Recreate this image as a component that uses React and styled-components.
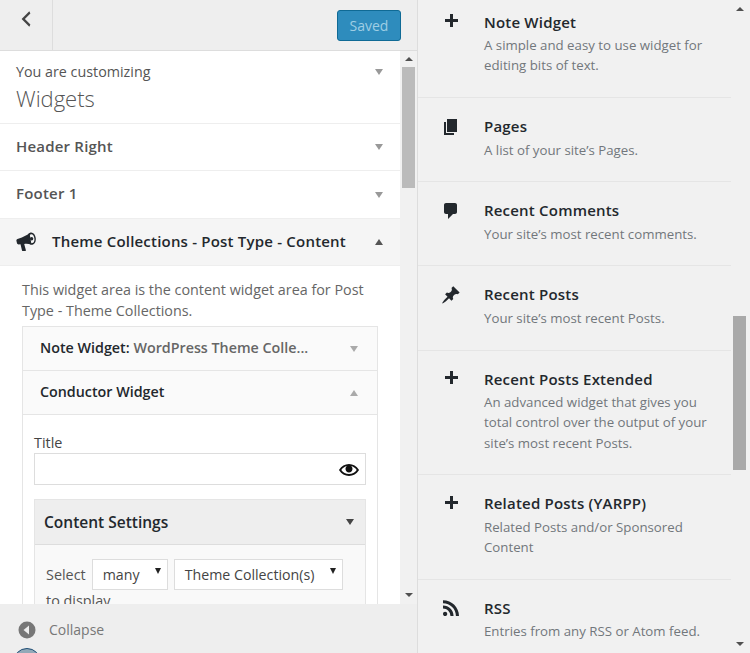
import React from "react";
import styled, { createGlobalStyle } from "styled-components";

const Global = createGlobalStyle`
  html, body { margin: 0; padding: 0; width: 750px; height: 653px; overflow: hidden; background: #f1f1f1; }
  #root { width: 750px; height: 653px; }
  * { box-sizing: border-box; }
`;

const Page = styled.div`
  display: flex; width: 750px; height: 653px; overflow: hidden;
  font-family: "Open Sans", sans-serif; color: #555;
`;
const LeftPanel = styled.div`
  display: flex; flex-direction: column; width: 418px; height: 653px; flex: none;
  border-right: 1px solid #ddd; background: #eee;
`;
const Header = styled.div`
  display: flex; justify-content: space-between; height: 51px; flex: none;
  background: #eee; border-bottom: 1px solid #ddd; padding-right: 16px;
`;
const BackButton = styled.div`
  width: 53px; height: 50px; border-right: 1px solid #ddd; padding: 8px 0 0 15px; color: #444;
`;
const SavedButton = styled.div`
  width: 64px; height: 31px; margin-top: 10px; display: flex; align-items: center; justify-content: center;
  background: #2e8cbd; border: 1px solid #0f6a95; border-radius: 3px; color: #9fcee4; font-size: 14px;
`;
const Middle = styled.div`
  display: flex; flex: 1; min-height: 0; overflow: hidden;
`;
const Scroller = styled.div`
  width: 400px; flex: none; background: #fff; overflow: hidden;
`;
const Scrollbar = styled.div`
  display: flex; flex-direction: column; align-items: center; width: 17px; flex: none;
  background: #f1f1f1; padding-top: ${(p) => p.$pad}px;
`;
const Thumb = styled.div`
  width: 13px; flex: none; height: ${(p) => p.$h}px; margin-top: ${(p) => p.$top}px; background: ${(p) => p.$bg};
`;
const SmallArrow = styled.div`
  width: 0; height: 0; flex: none;
  border-left: 4px solid transparent; border-right: 4px solid transparent;
  ${(p) => (p.$up ? "border-bottom" : "border-top")}: 4px solid #505050;
  ${(p) => p.$end && "margin-top: auto; margin-bottom: 7px;"}
`;
const SelectArrow = styled.span`
  display: block; width: 0; height: 0; flex: none; margin-bottom: 7px;
  border-left: 3px solid transparent; border-right: 3px solid transparent; border-top: 6px solid #222;
`;
const Caret = styled.span`
  display: block; width: 0; height: 0; flex: none;
  border-left: 4.5px solid transparent; border-right: 4.5px solid transparent;
  ${(p) => (p.$up ? "border-bottom" : "border-top")}: 6px solid ${(p) => p.$c || "#999"};
`;
const InfoSection = styled.div`
  display: flex; justify-content: space-between; height: 73px; padding: 11px 17px 0 16px;
  border-bottom: 1px solid #eee;
`;
const InfoCaret = styled.div`padding-top: 7px;`;
const InfoLabel = styled.div`font-size: 14.3px; line-height: 20px; color: #555;`;
const InfoTitle = styled.div`font-size: 22px; font-weight: 300; line-height: 30px; margin-top: 1px; color: #555;`;
const SectionRow = styled.div`
  display: flex; align-items: center; justify-content: space-between;
  height: ${(p) => p.$h}px; padding: 0 17px 0 16px; border-bottom: 1px solid #eee;
  background: ${(p) => (p.$open ? "#f5f5f5" : "#fff")};
`;
const SectionTitle = styled.div`
  font-size: 15px; font-weight: 600; letter-spacing: 0.2px; margin-bottom: 3px;
  color: ${(p) => (p.$dark ? "#23282d" : "#555")};
`;
const TitleGroup = styled.div`display: flex; align-items: center; gap: 16px;`;
const OpenBody = styled.div`padding: 13px 22px 0 22px;`;
const Description = styled.p`
  margin: 0 0 5px; font-size: 14.35px; line-height: 21px; color: #666;
`;
const WidgetBox = styled.div`border: 1px solid #e5e5e5; background: #fff;`;
const WidgetRow = styled.div`
  display: flex; align-items: center; justify-content: space-between; height: 44px;
  padding: 0 19px 0 17px; background: #fafafa; border-bottom: 1px solid #e5e5e5;
  font-size: 14.3px; font-weight: 600; color: #23282d;
`;
const WidgetLabel = styled.span`margin-bottom: 2px;`;
const WidgetName = styled.span`font-weight: 600; color: #666;`;
const WidgetBody = styled.div`padding: 18px 11px 0 11px;`;
const FieldLabel = styled.div`font-size: 14.4px; line-height: 20px; color: #444;`;
const TitleInput = styled.div`
  display: flex; align-items: center; justify-content: flex-end; height: 32px; padding: 2px 6px 0 0;
  border: 1px solid #ddd; background: #fff; color: #111; margin-bottom: 14px;
`;
const SettingsBox = styled.div`border: 1px solid #e5e5e5; background: #f9f9f9; height: 200px;`;
const SettingsHead = styled.div`
  display: flex; align-items: center; justify-content: space-between; height: 45px; padding: 0 11px 0 9px;
  background: #eee; border-bottom: 1px solid #ddd; font-size: 15.5px; font-weight: 600; color: #23282d;
`;
const SettingsBody = styled.div`padding: 14px 11px; font-size: 14.4px; color: #555;`;
const SelectRow = styled.div`display: flex; align-items: center; gap: 6px; color: #555;`;
const SelectBox = styled.div`
  display: flex; align-items: center; justify-content: space-between; height: 31px; width: ${(p) => p.$w}px;
  padding: 0 6px 0 10px; border: 1px solid #ddd; background: #fff; font-size: 14.2px; color: #444;
`;
const ToDisplay = styled.div`margin-top: 1px; line-height: 20px; color: #555;`;
const Footer = styled.div`
  height: 49px; flex: none; background: #eee; padding: 17px 0 0 18px; overflow: hidden;
`;
const CollapseRow = styled.div`
  display: flex; align-items: center; gap: 13px; height: 18px; font-size: 14px; color: #777;
`;
const CollapseLabel = styled.span`margin-bottom: 2px;`;
const Avatar = styled.div`
  width: 28px; height: 28px; border-radius: 50%; margin: 9px 0 0 -5px;
  border: 1px solid #1f4e75; background: #93a9b8;
`;
const RightPanel = styled.div`
  display: flex; flex: 1; background: #f1f1f1; overflow: hidden; height: 653px;
`;
const RightList = styled.div`
  width: 313px; flex: none; margin-top: -6.4px; height: 670px; overflow: hidden;
`;
const Item = styled.div`
  display: flex; border-bottom: 1px solid #e5e5e5; padding: 17px 14px 21.5px 23px; gap: 23px;
`;
const ItemIcon = styled.div`width: 20px; flex: none; color: #23282d; margin-top: 1.5px;`;
const ItemBody = styled.div`flex: 1; min-width: 0;`;
const ItemTitle = styled.div`font-size: 15px; font-weight: 600; line-height: 22px; color: #23282d; letter-spacing: 0.2px;`;
const ItemDesc = styled.div`font-size: 13.25px; line-height: 20.2px; color: #72777c; margin-top: 2.5px;`;

const Icon = ({ d, s = 20 }) => (
  <svg width={s} height={s} viewBox="0 0 20 20" fill="currentColor" style={{ display: "block" }}><path d={d} /></svg>
);
const PLUS = "M17 7v3h-5v5H9v-5H4V7h5V2h3v5h5z";
const PAGES = "M6 15V2h10v13H6zm-1 1h8v2H3V5h2v11z";
const COMMENT = "M5 2h9c1.1 0 2 .9 2 2v7c0 1.1-.9 2-2 2h-2l-5 5v-5H5c-1.1 0-2-.9-2-2V4c0-1.1.9-2 2-2z";
const PIN = "M10.44 3.02l1.82-1.82 6.36 6.35-1.83 1.82c-1.05-.68-2.48-.57-3.41.36l-.75.75c-.92.93-1.04 2.35-.35 3.41l-1.83 1.82-2.41-2.41-2.8 2.79c-.42.42-3.38 2.71-3.8 2.29s1.86-3.39 2.28-3.81l2.79-2.79L4.1 9.36l1.83-1.82c1.05.69 2.48.57 3.4-.36l.75-.75c.93-.92 1.05-2.35.36-3.41z";
const RSS = "M14.92 18H18C18 9.32 10.82 2.25 2 2.25v3.02c7.12 0 12.92 5.71 12.92 12.73zm-5.44 0h3.08C12.56 12.27 7.82 7.6 2 7.6v3.02c2 0 3.87.77 5.29 2.16A7.292 7.292 0 0 1 9.48 18zm-5.35-.02c1.17 0 2.13-.93 2.13-2.09 0-1.15-.96-2.09-2.13-2.09-1.18 0-2.13.94-2.13 2.09 0 1.16.95 2.09 2.13 2.09z";
const EYE = "M19.7 9.4C17.7 6 14 3.9 10 3.9S2.3 6 .3 9.4L0 10l.3.6c2 3.4 5.7 5.5 9.7 5.5s7.7-2.1 9.7-5.5l.3-.6-.3-.6zM10 14.1c-3.1 0-6-1.6-7.7-4.1C3.6 8 5.7 6.6 8 6.1c-.9.6-1.5 1.7-1.5 2.9 0 1.9 1.6 3.5 3.5 3.5s3.5-1.6 3.5-3.5c0-1.2-.6-2.3-1.5-2.9 2.3.5 4.4 1.9 5.7 3.9-1.7 2.5-4.6 4.1-7.7 4.1z";
const BACK = "M14 5l-5 5 5 5-1 2-7-7 7-7z";

const Megaphone = () => (
  <svg width="20" height="20" viewBox="0 0 20 20" style={{ display: "block" }}>
    <path fill="#23282d" d="M13.500 1 C11.800 2.800 8 4.800 1.500 7 C.7 7.300 .3 7.900 .4 8.700 L1 11.300 C1.200 12 1.800 12.400 2.600 12.400 L4.500 12.200 L6 18.500 C6.100 18.900 6.400 19.100 6.800 19.100 L9.300 19.100 C9.800 19.100 10 18.800 9.900 18.300 L8.200 11.900 C10.500 11.700 13 11.800 15.500 12.500 Z" />
    <path fill="#23282d" fillRule="evenodd" d="M14.500 .6 C17.200 .1 19.200 2.500 19.700 5.800 C20.200 9.100 19 12.200 16.500 12.800 C13.900 13.300 11.800 11 11.200 7.700 C10.700 4.400 12 1.200 14.500 .6 Z M15 2.300 C13.300 2.700 12.500 5 12.900 7.400 C13.300 9.800 14.700 11.500 16.300 11.100 C18 10.800 18.800 8.500 18.300 6 C17.900 3.600 16.600 2 15 2.300 Z" />
    <circle cx="15.600" cy="6.700" r="1.700" fill="#23282d" />
  </svg>
);

const items = [
  { t: "Note Widget", d: "A simple and easy to use widget for editing bits of text.", i: PLUS },
  { t: "Pages", d: "A list of your site’s Pages.", i: PAGES },
  { t: "Recent Comments", d: "Your site’s most recent comments.", i: COMMENT },
  { t: "Recent Posts", d: "Your site’s most recent Posts.", i: PIN },
  { t: "Recent Posts Extended", d: "An advanced widget that gives you total control over the output of your site’s most recent Posts.", i: PLUS },
  { t: "Related Posts (YARPP)", d: "Related Posts and/or Sponsored Content", i: PLUS },
  { t: "RSS", d: "Entries from any RSS or Atom feed.", i: RSS },
];

export default function App() {
  return (
    <Page>
      <Global />
      <LeftPanel>
        <Header>
          <BackButton><Icon d={BACK} s={22} /></BackButton>
          <SavedButton>Saved</SavedButton>
        </Header>
        <Middle>
          <Scroller>
            <InfoSection>
              <div>
                <InfoLabel>You are customizing</InfoLabel>
                <InfoTitle>Widgets</InfoTitle>
              </div>
              <InfoCaret><Caret /></InfoCaret>
            </InfoSection>
            <SectionRow $h={47}><SectionTitle>Header Right</SectionTitle><Caret /></SectionRow>
            <SectionRow $h={48}><SectionTitle>Footer 1</SectionTitle><Caret /></SectionRow>
            <SectionRow $h={47} $open>
              <TitleGroup><Megaphone /><SectionTitle $dark>Theme Collections - Post Type - Content</SectionTitle></TitleGroup>
              <Caret $up $c="#555" />
            </SectionRow>
            <OpenBody>
              <Description>This widget area is the content widget area for Post Type - Theme Collections.</Description>
              <WidgetBox>
                <WidgetRow>
                  <WidgetLabel>Note Widget: <WidgetName>WordPress Theme Colle...</WidgetName></WidgetLabel>
                  <Caret $c="#aaa" />
                </WidgetRow>
                <WidgetRow>
                  <WidgetLabel>Conductor Widget</WidgetLabel>
                  <Caret $up $c="#aaa" />
                </WidgetRow>
                <WidgetBody>
                  <FieldLabel>Title</FieldLabel>
                  <TitleInput><Icon d={EYE} /></TitleInput>
                  <SettingsBox>
                    <SettingsHead>Content Settings<Caret $c="#444" /></SettingsHead>
                    <SettingsBody>
                      <SelectRow>
                        Select
                        <SelectBox $w={76}>many<SelectArrow /></SelectBox>
                        <SelectBox $w={169}>Theme Collection(s)<SelectArrow /></SelectBox>
                      </SelectRow>
                      <ToDisplay>to display</ToDisplay>
                    </SettingsBody>
                  </SettingsBox>
                </WidgetBody>
              </WidgetBox>
            </OpenBody>
          </Scroller>
          <Scrollbar $pad={6}>
            <SmallArrow $up />
            <Thumb $h={121} $top={6} $bg="#bbb" />
            <SmallArrow $end />
          </Scrollbar>
        </Middle>
        <Footer>
          <CollapseRow>
            <svg width="18" height="18" viewBox="0 0 18 18" style={{ display: "block" }}>
              <circle cx="9" cy="9" r="8.5" fill="#777" />
              <path d="M11 4.500v9L5.500 9z" fill="#eee" />
            </svg>
            <CollapseLabel>Collapse</CollapseLabel>
          </CollapseRow>
          <Avatar />
        </Footer>
      </LeftPanel>
      <RightPanel>
        <RightList>
          {items.map((it) => (
            <Item key={it.t}>
              <ItemIcon><Icon d={it.i} /></ItemIcon>
              <ItemBody>
                <ItemTitle>{it.t}</ItemTitle>
                <ItemDesc>{it.d}</ItemDesc>
              </ItemBody>
            </Item>
          ))}
        </RightList>
        <Scrollbar $pad={7}>
          <SmallArrow $up />
          <Thumb $h={154} $top={305} $bg="#a9a9a9" />
          <SmallArrow $end />
        </Scrollbar>
      </RightPanel>
    </Page>
  );
}
